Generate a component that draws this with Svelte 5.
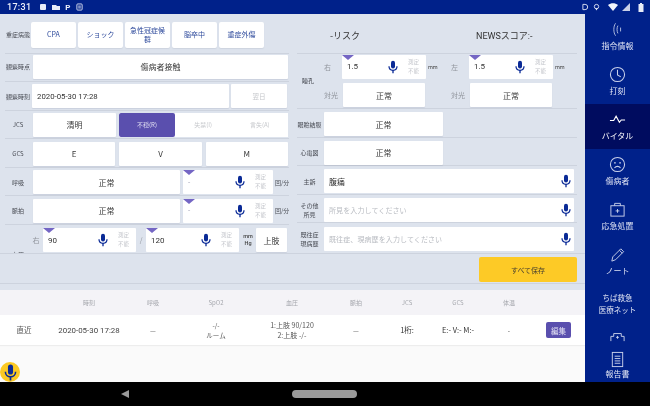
<script lang="ts">
  const crises = ['CPA', 'ショック', '急性冠症候群', '脳卒中', '重症外傷'];
  const history = [
    { k: 'time', label: '時刻' }, { k: 'resp', label: '呼吸' }, { k: 'spo2', label: 'SpO2' },
    { k: 'bp', label: '血圧' }, { k: 'pulse', label: '脈拍' }, { k: 'jcs', label: 'JCS' },
    { k: 'gcs', label: 'GCS' }, { k: 'temp', label: '体温' },
  ];
</script>

{#snippet mic(cls = 'mic')}
  <svg class={cls} viewBox="0 0 12 16" aria-hidden="true">
    <rect x="3.6" y="0.5" width="4.8" height="9.4" rx="2.4" fill="currentColor" />
    <path d="M1.2 7.2c0 3 2.2 4.8 4.8 4.8s4.8-1.8 4.8-4.8" fill="none" stroke="currentColor" stroke-width="1.5" />
    <path d="M6 12v3.500" stroke="currentColor" stroke-width="1.6" />
  </svg>
{/snippet}

{#snippet numInput(value, cls = '')}
  <div class="num {cls}">
    <i class="tri"></i>
    <span class="num__v" class:faint={value === '-'}>{value}</span>
    {@render mic()}
    <span class="num__na">測定<br />不能</span>
  </div>
{/snippet}

<div class="screen">
  <header class="status">
    <span class="clock">17:31</span>
    <span class="st-left">
      <svg viewBox="0 0 8 8" width="8" height="8"><rect x="1" y="1" width="6" height="6" rx="1" fill="#e8ecf8" /></svg>
      <svg viewBox="0 0 8 8" width="8" height="8"><path d="M0 2h4l1 1h3v4H0z" fill="#e8ecf8" /></svg>
      <span class="st-p">P</span>
      <svg viewBox="0 0 8 8" width="7" height="8"><rect x="1" y="0.5" width="6" height="7" rx="1" fill="none" stroke="#e8ecf8" /><path d="M2.5 3h3M2.5 5h3" stroke="#e8ecf8" /></svg>
    </span>
    <span class="st-right">
      <svg viewBox="0 0 8 8" width="7" height="8"><path d="M1 1h2.500a3 3 0 0 1 0 6H1z" fill="none" stroke="#e8ecf8" /></svg>
      <svg viewBox="0 0 8 8" width="7" height="8"><circle cx="4" cy="3.500" r="2.500" fill="none" stroke="#e8ecf8" /><path d="M2.500 5.500 4 8l1.500-2.500" fill="#e8ecf8" /></svg>
      <svg class="gap" viewBox="0 0 10 8" width="10" height="8"><path d="M0 2c3-2.500 7-2.500 10 0L5 8z" fill="#f2f4fb" /></svg>
      <svg viewBox="0 0 8 8" width="8" height="8"><path d="M0 8 8 0v8z" fill="#c9d0e8" /></svg>
      <svg class="gap" viewBox="0 0 6 9" width="6" height="9"><path d="M2 0h2v1h1.500v8h-5V1H2z" fill="#e8ecf8" /></svg>
    </span>
  </header>

  <div class="body">
    <main class="content">
      <section class="form">
        <div class="scroll">
          <div class="col col--l">
            <div class="row row--crisis">
              <span class="lbl lbl--tiny">重症病態</span>
              <div class="crises">
                {#each crises as c}<button class="crisis">{c}</button>{/each}
              </div>
            </div>
            <div class="row">
              <span class="lbl">観察時点</span>
              <div class="box grow big">傷病者接触</div>
            </div>
            <div class="row row--low row--date">
              <span class="lbl">観察時刻</span>
              <div class="box date">2020-05-30 17:28</div>
              <div class="box next">翌日</div>
            </div>
            <div class="row row--low">
              <span class="lbl">JCS</span>
              <div class="box jcs1 big">清明</div>
              <div class="seg">
                <span class="seg__on">不穏(R)</span>
                <span>失禁(I)</span>
                <span>言失(A)</span>
              </div>
            </div>
            <div class="row row--low row--gcs">
              <span class="lbl lbl--gcs">GCS</span>
              <div class="box grow">E</div>
              <div class="box grow">V</div>
              <div class="box grow">M</div>
            </div>
            <div class="row row--low">
              <span class="lbl">呼吸</span>
              <div class="box vital big">正常</div>
              {@render numInput('-', 'num--wide')}
              <span class="unit">回/分</span>
            </div>
            <div class="row row--low">
              <span class="lbl">脈拍</span>
              <div class="box vital big">正常</div>
              {@render numInput('-', 'num--wide')}
              <span class="unit">回/分</span>
            </div>
            <div class="row row--bp">
              <span class="lbl lbl--bp">血圧</span>
              <span class="side side--bp">右</span>
              {@render numInput('90', 'num--bp')}
              <span class="slash">/</span>
              {@render numInput('120', 'num--bp')}
              <span class="mmhg">mm<br />Hg</span>
              <div class="box limb">上肢</div>
            </div>
          </div>

          <div class="col col--r">
            <div class="scores">
              <span class="score score--risk">-リスク</span>
              <span class="score score--news">NEWSスコア:-</span>
            </div>
            <div class="row row--pupil">
              <span class="lbl lbl--pupil">瞳孔</span>
              <div class="pupil-grid">
                <span class="side side--a">右</span>
                {@render numInput('1.5', 'num--pupil')}
                <span class="mm">mm</span>
                <span class="side side--b">左</span>
                {@render numInput('1.5', 'num--pupil')}
                <span class="mm">mm</span>
                <span class="side side--a">対光</span>
                <div class="box light big">正常</div>
                <span></span>
                <span class="side side--b">対光</span>
                <div class="box light big">正常</div>
                <span></span>
              </div>
            </div>
            <div class="row">
              <span class="lbl lbl--r">眼瞼結膜</span>
              <div class="box small big">正常</div>
            </div>
            <div class="row">
              <span class="lbl lbl--r">心電図</span>
              <div class="box small big">正常</div>
            </div>
            <div class="row">
              <span class="lbl lbl--r">主訴</span>
              <div class="text"><span class="text__v">腹痛</span>{@render mic()}</div>
            </div>
            <div class="row">
              <span class="lbl lbl--r">その他<br />所見</span>
              <div class="text"><span class="text__ph">所見を入力してください</span>{@render mic()}</div>
            </div>
            <div class="row row--last">
              <span class="lbl lbl--r">既往症<br />現病歴</span>
              <div class="text"><span class="text__ph">既往症、現病歴を入力してください</span>{@render mic()}</div>
            </div>
          </div>
        </div>
        <div class="footer">
          <button class="save">すべて保存</button>
        </div>
      </section>

      <section class="hist">
        <div class="hist__grid hist__head">
          <span></span>
          {#each history as h}<span>{h.label}</span>{/each}
          <span></span>
        </div>
        <div class="hist__grid hist__row">
          <span class="h-near">直近</span>
          <span class="h-time">2020-05-30 17:28</span>
          <span>—</span>
          <span>-/-<br />ルーム</span>
          <span class="h-bp">1:上肢 90/120<br />2:上肢 -/-</span>
          <span>—</span>
          <span class="h-dark">1桁:</span>
          <span class="h-dark">E:- V:- M:-</span>
          <span>-</span>
          <span><button class="edit">編集</button></span>
        </div>
        <div class="fab">{@render mic('mic fab__mic')}</div>
      </section>
    </main>

    <nav class="side-nav">
      <div class="nav">
        <svg viewBox="0 0 22 18"><g fill="none" stroke="#c8d0ea" stroke-width="1.100"><path d="M8.500 1C5.500 5 5.500 13 8.500 17" /><path d="M11.500 4C10 7 10 11 11.500 14" /><path d="M15 6.500v5" /></g></svg>
        <span>指令情報</span>
      </div>
      <div class="nav">
        <svg viewBox="0 0 18 18"><g fill="none" stroke="#c8d0ea" stroke-width="1.100"><circle cx="9" cy="9" r="7.500" /><path d="M9 4v5.500l3.500 2" /></g></svg>
        <span>打刻</span>
      </div>
      <div class="nav nav--on">
        <svg viewBox="0 0 18 18"><path d="M1 10h4l2.500-4.500L11 12l2-2.500h4" fill="none" stroke="#fff" stroke-width="1.200" /></svg>
        <span>バイタル</span>
      </div>
      <div class="nav">
        <svg viewBox="0 0 18 18"><g fill="none" stroke="#c8d0ea" stroke-width="1.100"><circle cx="9" cy="9" r="7.500" /><path d="M5.800 12.500c1.800-2 4.600-2 6.400 0" /></g><circle cx="6.300" cy="7.200" r="0.900" fill="#c8d0ea" /><circle cx="11.700" cy="7.200" r="0.900" fill="#c8d0ea" /></svg>
        <span>傷病者</span>
      </div>
      <div class="nav">
        <svg viewBox="0 0 18 18"><g fill="none" stroke="#c8d0ea" stroke-width="1"><rect x="2" y="5" width="14" height="11" /><path d="M6 5V2.500h6V5M9 8.500v4M7 10.500h4" /></g></svg>
        <span>応急処置</span>
      </div>
      <div class="nav">
        <svg viewBox="0 0 18 18"><path d="M3 16l1-4.500L12.500 3l3 3L7 14.500zM11 4.500l3 3" fill="none" stroke="#c8d0ea" stroke-width="1" /></svg>
        <span>ノート</span>
      </div>
      <div class="nav nav--text"><span>ちば救急<br />医療ネット</span></div>
      <div class="nav nav--clip">
        <svg viewBox="0 0 18 18"><path d="M2 16v-5h3V8h8v3h3v5M9 10.500v3M7.500 12h3" fill="none" stroke="#c8d0ea" stroke-width="1" /></svg>
      </div>
      <div class="nav nav--report">
        <svg viewBox="0 0 18 18"><g fill="none" stroke="#c8d0ea" stroke-width="1"><rect x="3.500" y="1.500" width="11" height="15" /><path d="M6 5.500h6M6 8h6M6 10.500h6M6 13h6" /></g></svg>
        <span>報告書</span>
      </div>
    </nav>
  </div>

  <footer class="sysbar">
    <i class="back"></i>
    <i class="home"></i>
  </footer>
</div>

<style>
  :global(body) { margin: 0; background: #000; }

  .screen {
    width: 650px; height: 406px; display: flex; flex-direction: column; overflow: hidden;
    font-family: 'Noto Sans CJK JP', 'Roboto', sans-serif; color: #3a3d44;
    filter: blur(0.35px);
  }

  .status {
    height: 14px; background: #00218a; color: #eef1fa; display: flex; align-items: center;
    padding: 0 6px 0 7px; flex: none;
  }
  .clock { font: 500 9px 'Roboto', sans-serif; letter-spacing: .3px; }
  .st-left { display: flex; align-items: center; gap: 5px; margin-left: 8px; }
  .st-p { font: 700 8px 'Roboto', sans-serif; }
  .st-right { margin-left: auto; display: flex; align-items: center; gap: 4px; }
  .st-right .gap { margin-left: 4px; }

  .body { flex: 1; display: flex; min-height: 0; }
  .content { width: 585px; flex: none; display: flex; flex-direction: column; background: #fafafa; }

  .form { height: 276px; flex: none; background: #dde3ed; display: flex; flex-direction: column; }
  .scroll { height: 239px; overflow: hidden; display: flex; flex: none; padding-top: 8px; box-sizing: border-box; }

  .col--l { width: 290px; flex: none; }
  .col--r { width: 295px; flex: none; padding-left: 7px; box-sizing: border-box; }

  .row {
    display: flex; align-items: center; height: 28.600px; box-sizing: border-box;
    border-bottom: 1px solid #cdd3de; padding: 0 1px 1px 0; margin-left: 5px; width: 284px; gap: 3px;
  }
  .row--low { padding-top: 2px; }
  .col--r .row { margin-left: 0; width: 280px; gap: 2px; padding: 3px 0 0; }
  .row--crisis { height: 31.500px; padding-bottom: 5px; }
  .row--gcs { gap: 4px; }
  .row--date { gap: 2px; }
  .row--last, .row--bp { border-bottom: 0; }

  .lbl { width: 26px; margin-right: -1px; flex: none; text-align: center; font-size: 6px; line-height: 9px; color: #474a52; white-space: nowrap; }
  .lbl--tiny { margin-right: -3px; }
  .lbl--gcs { margin-right: -2px; }
  .lbl--r { width: 25px; margin-right: 0; }

  .box {
    background: #fff; height: 24px; display: flex; align-items: center; justify-content: center;
    font-size: 8px; color: #383838; border-radius: 1px; box-shadow: 0 1px 1px rgba(120,130,150,.18); flex: none;
  }
  .big { font-size: 8px; }
  .grow { flex: 1 1 0; }
  .date { width: 197px; justify-content: flex-start; padding-left: 5px; box-sizing: border-box; font: 7.800px 'Roboto', sans-serif; color: #333; }
  .next { width: 56px; color: #c4c6ca; font-size: 6.500px; }
  .jcs1 { width: 83px; }
  .seg { flex: 1; height: 24px; background: #fff; display: flex; align-items: center; font-size: 6px; color: #c6c8cc; }
  .seg span { flex: 1 1 0; text-align: center; }
  .seg .seg__on {
    flex: 0 0 56px; height: 24px; line-height: 24px; background: #5a4fae; color: #e4e2f4; border-radius: 2px;
  }
  .vital { width: 147px; }
  .small { width: 119px; }
  .light { width: 82px; }

  .crises { display: flex; gap: 2px; }
  .crisis {
    width: 45px; height: 26px; border: 0; background: #fff; color: #2e4a9c; padding: 0 2px; border-radius: 2px;
    font: 7px/9px 'Noto Sans CJK JP', sans-serif; box-shadow: 0 1px 1px rgba(120,130,150,.15);
  }

  .num {
    position: relative; background: #fff; height: 24px; display: flex; align-items: center; border-radius: 1px;
    flex: none; box-sizing: border-box; padding-left: 5px; font: 8px 'Roboto', sans-serif; color: #333;
  }
  .num--wide { width: 90px; }
  .num--bp { width: 93px; }
  .num--pupil { width: 84px; }
  .num__v { flex: 1; }
  .faint { color: #aab; }
  .num__na { width: 21px; flex: none; font: 5.500px/9px 'Noto Sans CJK JP', sans-serif; color: #c4c6cc; text-align: center; margin-left: 5px; margin-right: 2px; }
  .tri {
    position: absolute; left: 0; top: 0; width: 0; height: 0;
    border-left: 6px solid transparent; border-right: 6px solid transparent; border-top: 5px solid #7466c4;
  }
  .mic { width: 10px; height: 14px; color: #0a2a96; flex: none; }

  .unit { font-size: 6px; color: #4a4d55; margin-left: -1px; white-space: nowrap; }
  .side { font-size: 7px; color: #8f939b; white-space: nowrap; }

  .row--bp { gap: 0; padding-top: 3px; }
  .lbl--bp { align-self: flex-end; margin: 0 0 -6px 0; }
  .side--bp { width: 10px; margin-right: 2px; text-align: center; }
  .slash { font-size: 7px; color: #8f939b; width: 10px; text-align: center; }
  .mmhg { font: 500 5.500px/7.500px 'Roboto', sans-serif; color: #444; text-align: center; width: 12px; margin-left: 3px; }
  .limb { width: 31px; margin-left: 2px; }

  .scores {
    height: 40px; box-sizing: border-box; display: flex; align-items: center; border-bottom: 1px solid #cdd3de;
    font-size: 9px; color: #333; width: 280px; margin-top: -8px; padding-top: 4px;
  }
  .score--risk { margin-left: 33px; width: 146px; }
  .score--news { font-family: 'Roboto', 'Noto Sans CJK JP', sans-serif; }

  .col--r .row--pupil { height: 55px; padding: 0 0 1px; }
  .lbl--pupil { width: 22px; }
  .pupil-grid {
    display: grid; grid-template-columns: 23px 84px 15px 28px 84px 15px; grid-template-rows: 25px 24px; row-gap: 4px;
    align-items: center; justify-items: center; margin-left: -1px;
  }
  .side--a { justify-self: start; margin-left: 5px; }
  .side--b { justify-self: start; margin-left: 10px; }
  .mm { font: 5.500px 'Roboto', sans-serif; color: #444; justify-self: start; margin-left: 2px; }

  .text { flex: none; width: 250px; height: 24px; background: #fff; border-radius: 1px; display: flex; align-items: center; padding: 0 3px 0 5px; box-sizing: border-box; }
  .text__v { flex: 1; font-size: 8px; color: #333; }
  .text__ph { flex: 1; font-size: 7px; color: #b8bbc1; letter-spacing: .1px; }

  .footer {
    flex: 1; border-top: 1px solid #cdd3de; display: flex; justify-content: flex-end; align-items: flex-start;
    padding: 3px 8px 0 0; position: relative;
  }
  .footer::after { content: ''; position: absolute; left: 0; right: 0; top: 29px; border-top: 1px solid #cdd3de; }
  .save {
    width: 98px; height: 25px; border: 0; background: #fdca26; border-radius: 2px; color: #4a4230;
    font: 7px 'Noto Sans CJK JP', sans-serif;
  }

  .hist { flex: 1; position: relative; }
  .hist__grid {
    display: grid; grid-template-columns: 48px 82px 46px 80px 72px 56px 46px 56px 46px 53px;
    align-items: center; justify-items: center;
  }
  .hist__head { height: 25px; background: #f4f3f7; font: 6px 'Noto Sans CJK JP', sans-serif; color: #a5a7ad; }
  .hist__row {
    height: 30px; background: #fff; font: 6.500px/10px 'Noto Sans CJK JP', sans-serif; color: #555;
    text-align: center; box-shadow: 0 1px 1px rgba(0,0,0,.05); white-space: nowrap;
  }
  .h-near { font-size: 7.500px; color: #555; }
  .h-time { font: 7.900px 'Roboto', sans-serif; color: #444; }
  .h-bp { font-size: 7px; }
  .h-dark { color: #333; font-size: 7.500px; }
  .edit {
    width: 25px; height: 16px; border: 0; padding: 0; background: #5a4fae; color: #e6e4f5; border-radius: 2px;
    font: 7.500px 'Noto Sans CJK JP', sans-serif;
  }
  .fab {
    position: absolute; left: 0; bottom: 0; width: 20px; height: 20px; border-radius: 50%; background: #fbc923;
    display: flex; align-items: center; justify-content: center;
  }
  .fab__mic { width: 13px; height: 17px; color: #0a2a96; }

  .side-nav { width: 65px; flex: none; background: #00218a; display: flex; flex-direction: column; overflow: hidden; }
  .nav {
    height: 45px; flex: none; box-sizing: border-box; display: flex; flex-direction: column; align-items: center;
    padding-top: 7px; gap: 2px; color: #dfe4f4; font-size: 8px; line-height: 11px;
  }
  .nav svg { width: 17px; height: 17px; flex: none; }
  .nav--on { background: #000c5f; color: #fff; }
  .nav--text { text-align: center; padding-top: 8px; line-height: 11.500px; font-size: 7.500px; white-space: nowrap; }
  .nav--clip { height: 16px; padding-top: 0; overflow: hidden; }
  .nav--clip svg { margin-top: -3px; }
  .nav--report { padding-top: 6px; height: 37px; gap: 0; }

  .sysbar { height: 24px; flex: none; background: #000; display: flex; align-items: center; position: relative; }
  .back {
    position: absolute; left: 121px; top: 8px; width: 0; height: 0;
    border-top: 4px solid transparent; border-bottom: 4px solid transparent; border-right: 8px solid #9a9a9a;
  }
  .home { position: absolute; left: 292px; top: 8px; width: 65px; height: 8px; border-radius: 4px; background: #9a9a9a; }
</style>
